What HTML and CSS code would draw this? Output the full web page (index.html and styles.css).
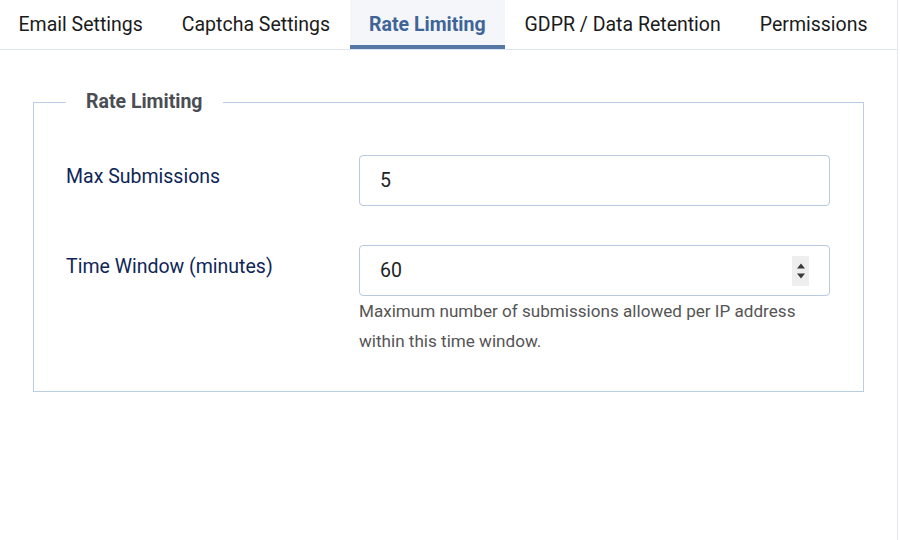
FILE: index.html
```html
<!DOCTYPE html>
<html lang="en">
<head>
<meta charset="utf-8">
<title>Form Settings</title>
<link rel="stylesheet" href="styles.css">
</head>
<body>
<div class="panel">
  <nav class="tabs">
    <a class="tab">Email Settings</a>
    <a class="tab">Captcha Settings</a>
    <a class="tab active">Rate Limiting</a>
    <a class="tab">GDPR / Data Retention</a>
    <a class="tab">Permissions</a>
  </nav>
  <div class="tab-body">
    <fieldset class="group">
      <legend class="group-title">Rate Limiting</legend>
      <div class="field">
        <label class="field-label" for="max-sub">Max Submissions</label>
        <div class="field-control">
          <input class="input" id="max-sub" type="text" value="5">
        </div>
      </div>
      <div class="field">
        <label class="field-label" for="window">Time Window (minutes)</label>
        <div class="field-control">
          <div class="number-wrap">
            <input class="input" id="window" type="text" value="60">
            <span class="spinner">
              <svg width="12" height="24" viewBox="0 0 12 24"><path d="M2 9.5 L6 4.5 L10 9.5 Z M2 14.5 L6 19.5 L10 14.5 Z" fill="#3a3a3a"/></svg>
            </span>
          </div>
          <p class="help">Maximum number of submissions allowed per IP address within this time window.</p>
        </div>
      </div>
    </fieldset>
  </div>
</div>
</body>
</html>
```

FILE: styles.css
```css
html, body {
  margin: 0;
  padding: 0;
  background: #fff;
}

body {
  font-family: Roboto, "Liberation Sans", Arial, sans-serif;
  color: #222;
}

.panel {
  width: 897px;
  height: 540px;
  border-right: 1px solid #e3e8f2;
  box-sizing: content-box;
}

.tabs {
  display: flex;
  height: 49px;
  border-bottom: 1px solid #dfe5ef;
  margin-left: -1px;
}

.tab {
  display: flex;
  align-items: center;
  padding: 0 19.5px;
  font-size: 19.5px;
  color: #1b1b1b;
  position: relative;
  box-sizing: border-box;
}

.tab.active {
  background: #f4f6fa;
  color: #3e6498;
  font-weight: 700;
}

.tab.active::after {
  content: "";
  position: absolute;
  left: 0;
  right: 0;
  bottom: 0;
  height: 4px;
  background: #5678a4;
}

.tab-body {
  padding: 40px 33px 0 33px;
}

.group {
  margin: 0;
  border: 1px solid #b9cde3;
  padding: 41px 33px 35px 32px;
  min-width: 0;
}

.group-title {
  padding: 0 20px;
  font-size: 19.5px;
  font-weight: 700;
  color: #4a4e54;
  line-height: 24px;
}

.field {
  display: grid;
  grid-template-columns: 293px 1fr;
  align-items: start;
}

.field + .field {
  margin-top: 39px;
}

.field-label {
  padding-top: 9px;
  font-size: 19.5px;
  line-height: 26px;
  color: #0f2657;
}

.input {
  display: block;
  width: 100%;
  height: 51px;
  box-sizing: border-box;
  border: 1px solid #b9c9df;
  border-radius: 4px;
  padding: 0 20px;
  font-family: inherit;
  font-size: 19.5px;
  color: #222;
  background: #fff;
  outline: none;
}

.number-wrap {
  position: relative;
}

.spinner {
  position: absolute;
  right: 21px;
  top: 11px;
  width: 17px;
  height: 30px;
  background: #eeeeee;
  display: flex;
  align-items: center;
  justify-content: center;
}

.help {
  margin: 0;
  font-size: 17.1px;
  line-height: 30px;
  color: #555;
}
```
